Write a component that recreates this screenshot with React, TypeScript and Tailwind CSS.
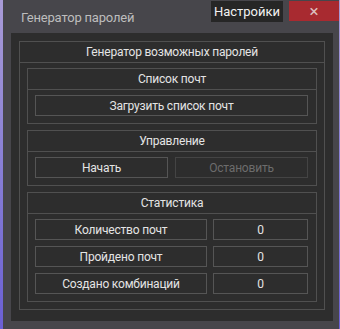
import React from 'react';

// Password generator window: title bar + nested bordered groups.

const font = { fontFamily: 'Roboto, "Liberation Sans", sans-serif' };

function Group({ title, children }: { title: string; children: React.ReactNode }) {
  return (
    <div className="border border-[#505050]">
      <div className="flex h-[21px] items-center justify-center border-b border-[#505050] text-[12px] tracking-[-0.2px] text-[#e4e4e4]">
        {title}
      </div>
      <div className="pt-[5px] pb-[7px] pl-[7px] pr-[8px]">{children}</div>
    </div>
  );
}

function Cell({ children, dim }: { children: React.ReactNode; dim?: boolean }) {
  return (
    <div
      className={
        'flex h-[21px] items-center justify-center border text-[12px] tracking-[-0.2px] ' +
        (dim ? 'border-[#444444] text-[#6c6c6c]' : 'border-[#555555] text-[#e4e4e4]')
      }
    >
      {children}
    </div>
  );
}

const STATS = [
  { label: 'Количество почт', value: '0' },
  { label: 'Пройдено почт', value: '0' },
  { label: 'Создано комбинаций', value: '0' },
];

export default function App() {
  return (
    <div
      className="flex h-[329px] w-[340px] bg-gradient-to-b from-[#a99bd6] to-[#6b5fd4] pl-[3px] pr-[1px]"
      style={font}
    >
      <div className="flex w-full flex-col bg-[#47464b]">
        {/* Title bar */}
        <div className="flex h-[33px] items-start">
          <div className="pl-[18px] pt-[8px] text-[13px] tracking-[-0.2px] text-[#bdbdbd]">Генератор паролей</div>
          <div className="ml-auto mt-[1px] flex h-[21px] w-[72px] items-center justify-center bg-[#262626] text-[13px] text-[#f2f2f2]">
            Настройки
          </div>
          <div className="ml-[6px] mt-[1px] flex h-[20px] w-[50px] items-center justify-center bg-[#a82a30] text-[17px] leading-none text-[#dcc0c0]">
            ×
          </div>
        </div>

        {/* Dark panel */}
        <div className="ml-[8px] mr-[6px] h-[288px] bg-[#2d2d2d] px-[8px] pt-[8px]">
          <div className="border border-[#505050]">
            <div className="flex h-[21px] items-center justify-center border-b border-[#505050] text-[12px] tracking-[-0.2px] text-[#e4e4e4]">
              Генератор возможных паролей
            </div>
            <div className="flex flex-col gap-[6px] px-[7px] pt-[5px] pb-[7px]">
              <Group title="Список почт">
                <Cell>Загрузить список почт</Cell>
              </Group>
              <Group title="Управление">
                <div className="grid grid-cols-2 gap-[7px]">
                  <Cell>Начать</Cell>
                  <Cell dim>Остановить</Cell>
                </div>
              </Group>
              <Group title="Статистика">
                <div className="flex flex-col gap-[6px]">
                  {STATS.map((s) => (
                    <div key={s.label} className="grid grid-cols-[172px_1fr] gap-[6px]">
                      <Cell>{s.label}</Cell>
                      <Cell>{s.value}</Cell>
                    </div>
                  ))}
                </div>
              </Group>
            </div>
          </div>
        </div>
      </div>
    </div>
  );
}
